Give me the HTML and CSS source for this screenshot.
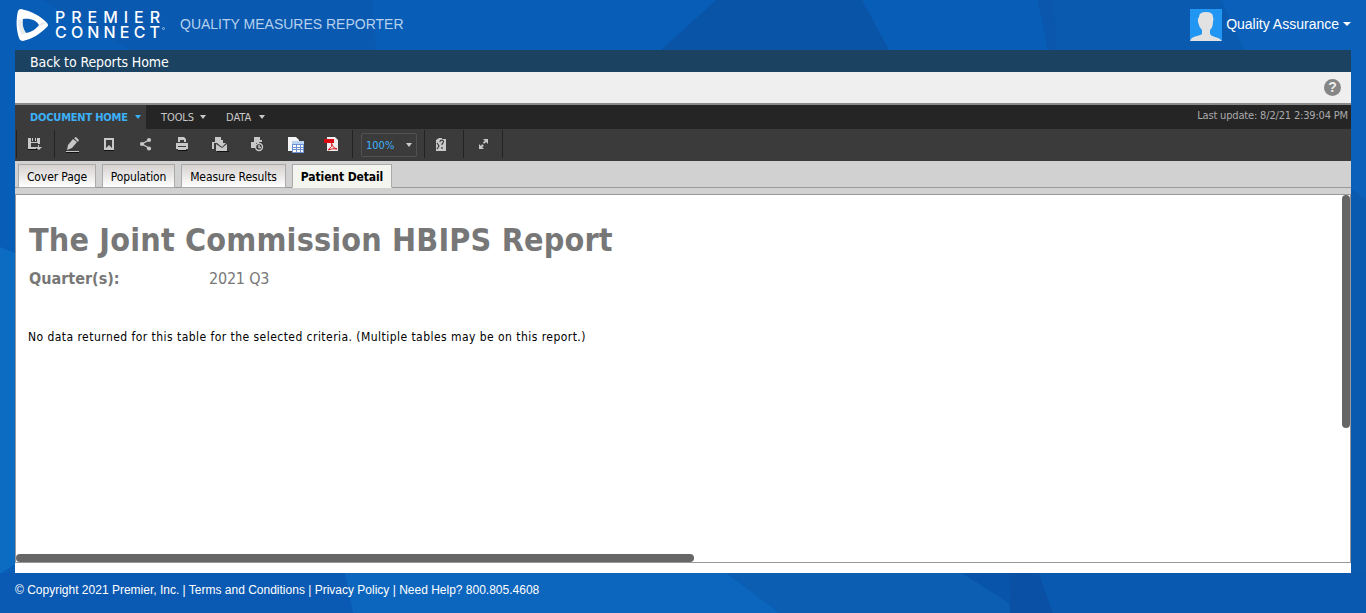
FILE: index.html
```html
<!DOCTYPE html>
<html lang="en">
<head>
<meta charset="utf-8">
<title>Quality Measures Reporter</title>
<link rel="stylesheet" href="styles.css">
</head>
<body>
<svg class="backdrop" viewBox="0 0 1366 613" aria-hidden="true">
  <path fill="#085db7" d="M0 0h1366v613H0z"/>
  <path fill="#0a59b0" d="M42 0h330l4 50H130z"/>
  <path fill="#0a54a8" d="M716 0h146l27 50H661z"/>
  <path fill="#0a57ad" d="M1038 0h16l2 50h-8z"/>
  <path fill="#0a5aaf" d="M1054 0h166l24 50h-188z"/>
  <path fill="#0b61ba" d="M1222 0h144v200l-15-12V50h-107z"/>
  <path fill="#0a5ab0" d="M1351 188l15 12v413h-15z"/>
  <path fill="#0b6cc2" d="M0 247l15 6v311L0 574z"/>
  <path fill="#0a59b2" d="M0 573h345l8 40H0z"/>
  <path fill="#0c66be" d="M345 573h383l52 40H353z"/>
  <path fill="#0c5eb2" d="M726 573h236l62 40H780z"/>
  <path fill="#0954ab" d="M962 573h47v30z"/>
  <path fill="#0a50a5" d="M1009 573h30l14 40h-43z"/>
  <path fill="#0a59b0" d="M1039 573h327v40h-313z"/>
</svg>
<div class="page">
  <header class="masthead">
    <svg class="logo" viewBox="0 0 150 34" role="img" aria-label="Premier Connect">
      <path fill="#fff" fill-rule="evenodd" d="M6 1C16 3 26 8 32 15q2 2 0 4C25 26 17 31 8 33q-3 0-4-3C1 21 1 11 3 3q1-2 3-2zM8 11c-1 5 0 10 3 14 6-1 10-4 13-8-2-4-8-7-16-6z"/>
      <path fill="#c8ccd2" d="M3 12l5-1q-1 8 3 14l-4 2Q3 20 3 12zM24 17l3-3 4 1-9 5z" opacity=".4"/>
      <text class="logo-word" x="40" y="14.500" textLength="105">PREMIER</text>
      <text class="logo-word" x="40" y="30" textLength="105">CONNECT</text>
      <circle cx="148.500" cy="20.500" r="1" fill="none" stroke="#fff" stroke-width=".5"/>
    </svg>
    <h1 class="product">QUALITY MEASURES REPORTER</h1>
    <div class="account">
      <svg class="avatar" viewBox="0 0 32 32"><path fill="#2196f3" d="M0 0h32v32H0z"/><path fill="#e2e2e2" d="M9 8q0-5 7-5t7 5q1 2 0 5 0 5-3 8v4q1 2 5 3 5 1 7 4H0q1-4 7-5 4-1 5-2v-4q-3-3-4-8-1-3 1-5z"/></svg>
      <span>Quality Assurance</span><i class="caret"></i>
    </div>
  </header>
  <nav class="backbar"><a>Back to Reports Home</a></nav>
  <div class="helpbar"><span class="help">?</span></div>
  <div class="menubar">
    <span class="menu menu-active"><span class="label-home">DOCUMENT HOME</span><i class="caret"></i></span>
    <span class="menu"><span class="label-tools">TOOLS</span><i class="caret"></i></span>
    <span class="menu data-menu"><span class="label-data">DATA</span><i class="caret"></i></span>
    <span class="updated">Last update: 8/2/21 2:39:04 PM</span>
  </div>
  <div class="toolbar">
    <svg class="tools" viewBox="0 0 490 32">
      <path stroke="#222" d="M1.500 1v28M39.500 1v28M337.500 1v28M409.500 1v28M448.500 1v28M487.500 1v28"/>
      <g fill="#111">
        <path d="M13 20h9v1h-9zM51 23h13v1H51zM89 21h10v1H89zM163 21h9v1h-9zM202 22h12v1h-12z"/>
      </g>
      <g fill="#c8c8c8">
        <path d="M13 9h3v4h6V9h3v6h-2v-1h-7v4h5v2h-8zM17 9h1v3h-1zM20 9h1v3h-1zM23 16h1v2h3l-3 3-4-3h3z"/>
        <path d="M53 16l5-6 4 3-5 6-5 2zM59 9l2-1 3 3-1 2zM51 22h13v1H51z"/>
        <path fill-rule="evenodd" d="M89 9h10v12H89zM91 11v8l3-3 3 3v-8z"/>
        <path d="M161 14h12v6h-2v-3h-8v3h-2zM163 13V8h6l2 2v3h-2v-2h-4v2zM163 18h8v3h-8z"/>
        <path d="M200 8h6v3h2v3h-9v6h-2v-7h3zM201 15l6 4 5-4v7h-11zM202 14h9l-4 4z"/>
        <path d="M239 8h6v3h2v2h-3v1h-3v5h-5v-6h3z"/>
      </g>
      <g fill="none" stroke="#c8c8c8" stroke-width="1.400">
        <path d="M134 11l-7 4 7 4"/><circle cx="244" cy="18" r="3.500"/><path d="M244 16v2.500h2"/>
      </g>
      <g fill="#c8c8c8"><circle cx="134" cy="11" r="2.100"/><circle cx="127" cy="15" r="2.100"/><circle cx="134" cy="19.500" r="2.100"/></g>
      <path fill="#f3f5f6" d="M273 8h8l3 3v11h-11z"/><path fill="#6a92d2" d="M277 12h12v12h-12z"/><path fill="#b9d3f5" d="M277 12h12v3h-12z"/><path fill="#fff" d="M278 16h3v2h-3zM282 16h3v2h-3zM286 16h2v2h-2zM278 19h3v1h-3zM282 19h3v1h-3zM286 19h2v1h-2zM278 21h3v2h-3zM282 21h3v2h-3zM286 21h2v2h-2z"/>
      <path fill="#eee" d="M312 8h8l3 3v11h-11z"/><path fill="#d90b14" d="M309 10h10v4h-10z"/><path fill="none" stroke="#e01720" d="M313 21q5-4 4-6-1-2 0 1 1 3 5 4-4-1-9 1"/>
      <path fill="#c8c8c8" d="M421 11l3-2h3v1h4v12h-10z"/><path fill="none" stroke="#333" stroke-width="1.100" d="M425 13q0-2 2-2 3 1 0 4v1M427 18v2M422 14l2 3-2 3"/>
      <path fill="#c8c8c8" d="M468 10h5v5l-2-2-2 2-1-2 2-1zM464 15l2 2 1-2 2 2-2 1 2 2h-5z"/>
    </svg>
    <div class="zoombox"><span>100%</span><i class="caret"></i></div>
  </div>
  <div class="tabs">
    <span class="tab cover">Cover Page</span><span class="tab population">Population</span><span class="tab measures">Measure Results</span><span class="tab tab-active">Patient Detail</span>
  </div>
  <div class="gutter"></div>
  <main class="report">
    <h2>The Joint Commission HBIPS Report</h2>
    <div class="quarter"><b>Quarter(s):</b><span>2021 Q3</span></div>
    <p>No data returned for this table for the selected criteria. (Multiple tables may be on this report.)</p>
    <i class="scroll vertical"></i><i class="scroll horizontal"></i>
  </main>
  <div class="endcap"></div>
  <footer>© Copyright 2021 Premier, Inc. | Terms and Conditions | Privacy Policy | Need Help? 800.805.4608</footer>
</div>
</body>
</html>
```
FILE: styles.css
```css
* { box-sizing: border-box; }
body { margin: 0; height: 613px; overflow: hidden; background: #085db7; font-family: "DejaVu Sans Condensed", "DejaVu Sans", sans-serif; font-stretch: condensed; }
.backdrop { position: absolute; inset: 0; width: 1366px; height: 613px; }
.page { position: relative; width: 1336px; margin-left: 15px; }
.masthead { height: 50px; display: flex; align-items: center; color: #fff; font-family: "Liberation Sans", sans-serif; }
.logo { width: 150px; height: 34px; }
.logo-word { font: 500 16px Inter, sans-serif; fill: #fff; }
.product { margin: 0 0 2px 15px; font-size: 14px; font-weight: 400; color: #b5d1ee; white-space: nowrap; }
.account { margin-left: auto; display: flex; align-items: center; font-size: 14px; gap: 5px; }
.account span { margin: 0 0 2px -1px; }
.avatar { width: 32px; height: 32px; }
.caret { width: 0; height: 0; border: 4px solid transparent; border-top-color: currentColor; border-bottom: 0; }
.account .caret { margin: 0 0 2px -1px; }
.backbar { height: 22px; padding-left: 15px; background: #1c4261; color: #fff; font-size: 14px; line-height: 24px; letter-spacing: -0.1px; }
.helpbar { height: 31px; background: #efefef; display: flex; justify-content: flex-end; align-items: center; padding-right: 10px; }
.help { width: 17px; height: 17px; border-radius: 50%; background: #868686; color: #efefef; text-align: center; font: bold 14px/17px "Liberation Sans", sans-serif; }
.menubar { height: 26px; border-top: 2px solid #8a8a8a; background: #252525; display: flex; color: #c8c8c8; font-size: 11px; }
.menu { display: flex; align-items: center; padding-left: 15px; gap: 6px; white-space: nowrap; }
.menu .caret { border-left-width: 3.5px; border-right-width: 3.5px; }
.menu-active { width: 131px; background: #3b3b3b; color: #3cb1fa; font-weight: bold; }
.label-home { width: 99px; letter-spacing: -0.2px; }
.label-tools { width: 33px; letter-spacing: -0.1px; }
.label-data { width: 27px; }
.data-menu { padding-left: 20px; }
.updated { margin: 4px 3px 0 auto; color: #aaa; letter-spacing: -0.17px; }
.toolbar { height: 32px; background: #3b3b3b; display: grid; }
.tools, .zoombox { grid-area: 1 / 1; }
.tools { width: 490px; height: 32px; }
.zoombox { margin: 4px 0 0 346px; width: 56px; height: 24px; border: 1px solid #515151; border-radius: 2px; display: flex; align-items: center; justify-content: space-between; padding: 0 4px; color: #3cb1fa; font-size: 11px; }
.zoombox .caret { color: #ccc; border-left-width: 3.5px; border-right-width: 3.5px; }
.tabs { height: 27px; padding: 3px 0 0 3px; background: #d1d1d1; border-bottom: 1px solid #999; display: flex; font-size: 12px; }
.tab { height: 24px; border: 1px solid #aaa; background: linear-gradient(#d6d2d0, #fff); line-height: 25px; text-align: center; white-space: nowrap; }
.cover { width: 78px; letter-spacing: -0.1px; }
.population { width: 73px; margin-left: 6px; letter-spacing: -0.1px; }
.measures { width: 105px; margin-left: 6px; letter-spacing: -0.1px; }
.tab-active { width: 100px; margin-left: 6px; background: #f5f5f0; border-bottom-color: #f5f5f0; font-weight: bold; letter-spacing: -0.1px; }
.gutter { height: 6px; background: #d1d1d1; }
.report { position: relative; height: 369px; padding: 25px 13px; border: 1px solid #999; background: #fff; }
h2 { margin: 0; font-size: 32px; line-height: 40px; color: #777; white-space: nowrap; letter-spacing: 0.17px; }
.quarter { display: flex; margin-top: 9px; font-size: 16px; line-height: 20px; color: #777; }
.quarter b { width: 180px; }
.quarter span { letter-spacing: -0.2px; }
p { margin: 39px 0 0 -1px; font-size: 12px; line-height: 18px; white-space: nowrap; letter-spacing: 0.455px; }
.scroll { position: absolute; background: #666; border-radius: 4px; }
.vertical { top: 0; right: 0; width: 8px; height: 233px; }
.horizontal { bottom: 0; left: 0; width: 678px; height: 8px; }
.endcap { height: 10px; background: #fff; }
footer { padding-top: 9px; color: #fff; font: 12px/16px "Liberation Sans", sans-serif; }
```
